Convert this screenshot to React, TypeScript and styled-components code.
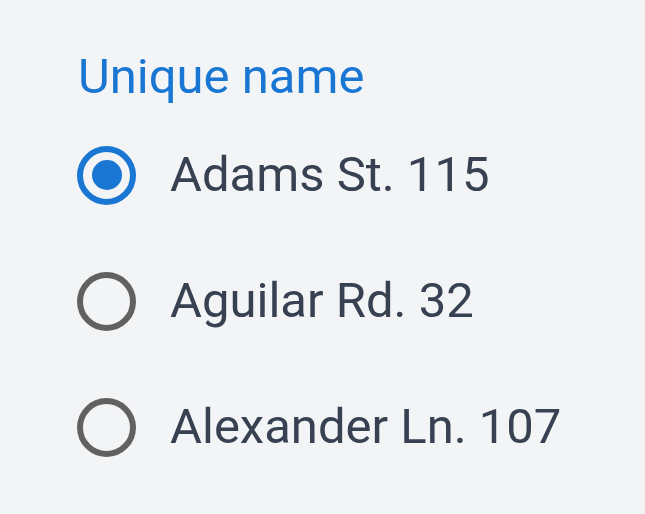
import React, { useState } from 'react';
import styled, { createGlobalStyle } from 'styled-components';

const GlobalStyle = createGlobalStyle`
  html, body {
    margin: 0;
    padding: 0;
    background-color: #f3f4f6;
    font-family: Roboto, "Liberation Sans", Arial, sans-serif;
  }
`;

const Page = styled.div`
  min-height: 514px;
  padding: 49px 0 0 77px;
  box-sizing: border-box;
`;

const Group = styled.div`
  display: flex;
  flex-direction: column;
`;

const Legend = styled.div`
  font-size: 49px;
  line-height: 56px;
  color: #1976d2;
  padding-left: 1px;
  margin-bottom: 7px;
`;

const Option = styled.label`
  display: flex;
  align-items: center;
  gap: 34px;
  height: 126px;
  cursor: pointer;
`;

const Circle = styled.span<{ $checked: boolean }>`
  width: 59px;
  height: 59px;
  box-sizing: border-box;
  border-radius: 50%;
  border: 6px solid ${p => (p.$checked ? '#1976d2' : '#616161')};
  display: flex;
  align-items: center;
  justify-content: center;
  flex-shrink: 0;

  &::after {
    content: '';
    width: 30px;
    height: 30px;
    border-radius: 50%;
    background-color: #1976d2;
    display: ${p => (p.$checked ? 'block' : 'none')};
  }
`;

const OptionText = styled.span`
  font-size: 49px;
  line-height: 56px;
  color: #374151;
`;

const streets = ['Adams St. 115', 'Aguilar Rd. 32', 'Alexander Ln. 107'];

const App: React.FC = () => {
  const [selected, setSelected] = useState(streets[0]);

  return (
    <>
      <GlobalStyle />
      <Page>
        <Group role="radiogroup">
          <Legend>Unique name</Legend>
          {streets.map(street => (
            <Option key={street} onClick={() => setSelected(street)}>
              <Circle $checked={selected === street} />
              <OptionText>{street}</OptionText>
            </Option>
          ))}
        </Group>
      </Page>
    </>
  );
};

export default App;
